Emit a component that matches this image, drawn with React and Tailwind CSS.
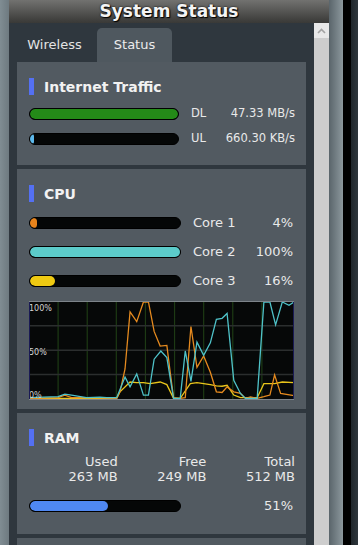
import React from "react";

const orange = "88,320 175,318 195,310 215,318 290,318 350,320 360,300 375,230 390,55 410,85 430,25 445,25 462,115 480,160 500,158 510,240 520,318 540,320 555,318 572,100 590,225 610,190 630,240 648,300 665,302 680,285 700,300 720,305 735,320 750,316 770,320 790,315 808,310 822,248 840,305 880,312";
const cyan = "88,318 175,315 195,307 215,310 260,318 300,316 320,318 350,318 375,255 390,285 410,245 430,310 445,310 462,200 482,175 500,195 520,320 540,320 555,175 572,268 590,148 610,188 630,150 648,78 665,75 680,60 700,265 720,305 735,320 770,320 790,25 808,25 825,95 845,25 865,35 880,25";
const yellow = "88,320 350,320 360,300 390,270 410,272 430,272 450,275 480,270 500,278 520,320 540,320 570,275 590,272 630,278 648,282 665,283 680,280 700,310 720,318 770,318 790,275 822,275 845,270 880,272";

const cores = [
  { name: "Core 1", value: "4%", width: 7, color: "bg-[#e8841c]" },
  { name: "Core 2", value: "100%", width: 152, color: "bg-[#5ccbca]" },
  { name: "Core 3", value: "16%", width: 25, color: "bg-[#efca12]" },
];

function Title({ children }) {
  return (
    <div className="flex items-center h-[17px]">
      <div className="w-[5px] h-[17px] bg-[#5470f2]" />
      <span className="ml-[10px] text-[14px] font-bold text-[#f2f2f2] leading-none">
        {children}
      </span>
    </div>
  );
}

function Bar({ w, fill, fillW }) {
  return (
    <div className={`${w} h-[12px] rounded-full bg-[#050707] border border-black overflow-hidden shrink-0`}>
      <div className={`h-full rounded-full ${fill}`} style={{ width: fillW }} />
    </div>
  );
}

function Chart() {
  const vLines = [175, 262, 349, 436, 523, 610, 697, 784];
  const hLines = [98, 173, 247];
  return (
    <div className="relative mt-[14px] w-[265px] h-[99px] bg-[#060808] border-t border-b border-[#7d848a]">
      <svg className="absolute inset-0 w-full h-full" viewBox="88 25 792 297" preserveAspectRatio="none">
        {vLines.map((x) => (
          <line key={x} x1={x} y1="25" x2={x} y2="322" stroke="#1d3a14" strokeWidth="1.2" vectorEffect="non-scaling-stroke" />
        ))}
        {hLines.map((y) => (
          <line key={y} x1="88" y1={y} x2="880" y2={y} stroke="#2b2e2e" strokeWidth="1.5" vectorEffect="non-scaling-stroke" />
        ))}
        <polyline points={yellow} fill="none" stroke="#e9c51b" strokeWidth="1.3" vectorEffect="non-scaling-stroke" />
        <polyline points={orange} fill="none" stroke="#e58a1f" strokeWidth="1.3" vectorEffect="non-scaling-stroke" />
        <polyline points={cyan} fill="none" stroke="#4fc2c8" strokeWidth="1.3" vectorEffect="non-scaling-stroke" />
      </svg>
      <span className="absolute left-0 top-[3px] text-[8px] leading-none text-[#d4d4d4]">100%</span>
      <span className="absolute left-0 top-[47px] text-[8px] leading-none text-[#d4d4d4]">50%</span>
      <span className="absolute left-0 top-[90px] text-[8px] leading-none text-[#d4d4d4]">0%</span>
      <div className="absolute inset-y-0 left-0 w-px bg-[#1a1a55]" />
      <div className="absolute inset-y-0 right-0 w-px bg-[#1a1a55]" />
    </div>
  );
}

export default function App() {
  return (
    <div className="w-[358px] h-[545px] flex overflow-hidden font-['DejaVu_Sans',sans-serif] text-[#e9e9e9]">
      {/* bord gauche */}
      <div className="w-[9px] bg-gradient-to-r from-[#808d93] to-[#6e7a80]" />

      <div className="w-[320px] flex flex-col">
        {/* Header */}
        <div className="h-[23px] bg-gradient-to-b from-[#727270] via-[#555553] to-[#393937] flex items-center justify-center">
          <span className="text-[17px] font-bold text-[#f4f4f4] leading-none [text-shadow:1px_1px_1px_#000,0_0_2px_#000]">
            System Status
          </span>
        </div>

        <div className="flex flex-1 min-h-0">
          <div className="w-[305px] bg-[#2f373e] flex flex-col overflow-hidden">
            {/* Tabs */}
            <div className="h-[39px] shrink-0 flex items-end px-2 gap-[5px]">
              <div className="w-[75px] h-[34px] flex items-center justify-center text-[13px] text-[#e4e4e4]">
                Wireless
              </div>
              <div className="w-[75px] h-[34px] rounded-t-[5px] bg-[#4f585f] flex items-center justify-center text-[13px] text-[#ececec]">
                Status
              </div>
            </div>

            <div className="px-2 flex flex-col gap-[4px]">
              {/* Internet Traffic */}
              <div className="h-[103px] shrink-0 bg-[#525a61] pt-[16px] pl-[12px] pr-[11px]">
                <Title>Internet Traffic</Title>
                <div className="mt-[13px] flex flex-col gap-[13px]">
                  <div className="flex items-center">
                    <Bar w="w-[150px]" fill="bg-[#248a18]" fillW="100%" />
                    <span className="ml-[12px] text-[11.5px] leading-none">DL</span>
                    <span className="flex-1 text-right text-[11.5px] leading-none">47.33 MB/s</span>
                  </div>
                  <div className="flex items-center">
                    <Bar w="w-[150px]" fill="bg-[#5db9ec]" fillW="4px" />
                    <span className="ml-[12px] text-[11.5px] leading-none">UL</span>
                    <span className="flex-1 text-right text-[11.5px] leading-none">660.30 KB/s</span>
                  </div>
                </div>
              </div>

              {/* CPU */}
              <div className="h-[240px] shrink-0 bg-[#525a61] pt-[16px] pl-[12px] pr-[13px]">
                <Title>CPU</Title>
                <div className="mt-[14px] flex flex-col gap-[16px]">
                  {cores.map((c) => (
                    <div key={c.name} className="flex items-center">
                      <Bar w="w-[152px]" fill={c.color} fillW={c.width} />
                      <span className="ml-[12px] text-[13px] leading-none">{c.name}</span>
                      <span className="flex-1 text-right text-[13px] leading-none">{c.value}</span>
                    </div>
                  ))}
                </div>
                <Chart />
              </div>

              {/* RAM */}
              <div className="h-[121px] shrink-0 bg-[#525a61] pt-[16px] pl-[12px] pr-[11px]">
                <Title>RAM</Title>
                <div className="mt-[8px] grid grid-cols-3 text-right text-[13px] leading-[15px]">
                  <div>Used<br />263 MB</div>
                  <div>Free<br />249 MB</div>
                  <div>Total<br />512 MB</div>
                </div>
                <div className="mt-[15px] flex items-center pr-[2px]">
                  <Bar w="w-[152px]" fill="bg-[#4f88f2]" fillW="78px" />
                  <span className="flex-1 text-right text-[13px] leading-none">51%</span>
                </div>
              </div>

              <div className="h-[40px] shrink-0 bg-[#525a61]" />
            </div>
          </div>

          {/* scrollbar */}
          <div className="w-[15px] bg-[#cdcdcd] flex flex-col">
            <div className="h-[15px] bg-[#e8e8e8] flex items-center justify-center">
              <svg width="9" height="6" viewBox="0 0 9 6">
                <path d="M1 5 L4.5 1.5 L8 5" fill="none" stroke="#a3a3a3" strokeWidth="1.6" />
              </svg>
            </div>
          </div>
        </div>
      </div>

      {/* bord droit */}
      <div className="w-[14px] bg-gradient-to-r from-[#5a656b] to-[#8c989d]" />
      <div className="w-[8px] bg-black" />
      <div className="w-[7px] bg-gradient-to-r from-[#1f262b] to-[#2e363c]" />
    </div>
  );
}
